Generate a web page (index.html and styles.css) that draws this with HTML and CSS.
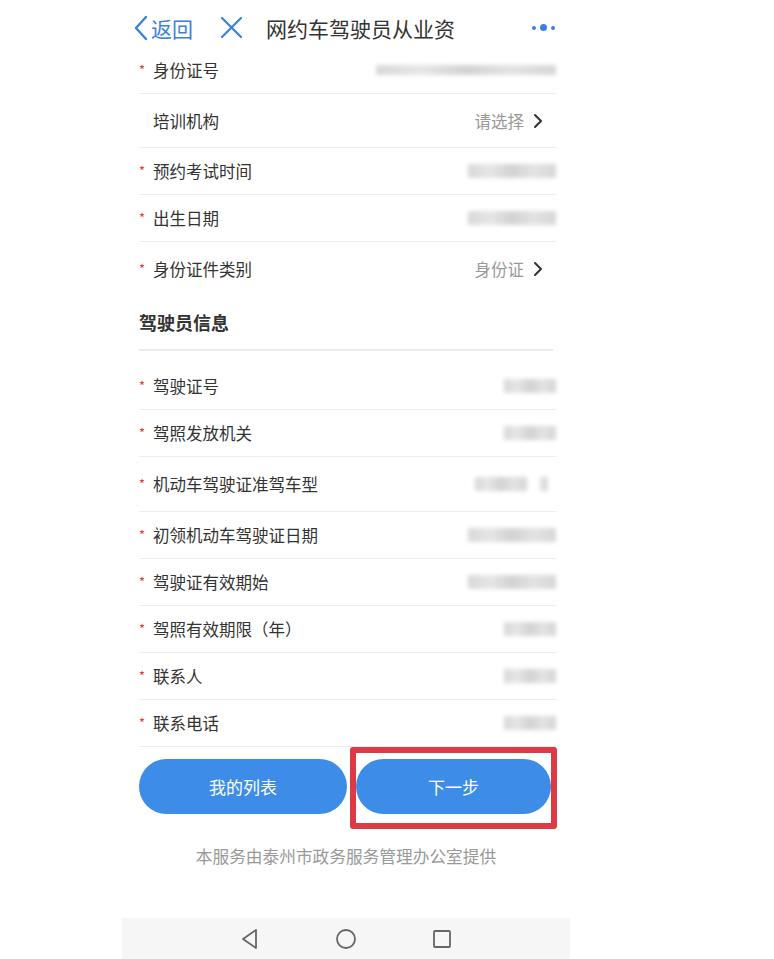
FILE: index.html
```html
<!DOCTYPE html>
<html lang="zh-CN">
<head>
    <meta charset="UTF-8">
    <meta name="viewport" content="width=device-width, initial-scale=1.0">
    <title>网约车驾驶员从业资格</title>
    <link rel="stylesheet" href="styles.css">
</head>
<body>
    <div class="phone">
        <!-- top bar -->
        <div class="topbar">
            <a class="back" href="#">
                <svg width="15" height="26" viewBox="0 0 15 26"><polyline points="13,2 3,13 13,24" fill="none" stroke="#3b80e0" stroke-width="2.4" stroke-linecap="round" stroke-linejoin="round"/></svg>
                <span>返回</span>
            </a>
            <a class="close" href="#">
                <svg width="23" height="23" viewBox="0 0 23 23"><path d="M2 2 L21 21 M21 2 L2 21" stroke="#3b80e0" stroke-width="2.2" stroke-linecap="round"/></svg>
            </a>
            <div class="title">网约车驾驶员从业资</div>
            <div class="dots"><i></i><i class="big"></i><i></i></div>
        </div>

        <div class="content">
            <div class="row">
                <div class="label"><span class="star">*</span>身份证号</div>
                <div class="blur w180"></div>
            </div>
            <div class="row tall">
                <div class="label"><span class="star"></span>培训机构</div>
                <div class="pick">请选择<svg width="11" height="16" viewBox="0 0 11 16"><polyline points="2,2 8,8 2,14" fill="none" stroke="#333" stroke-width="2" stroke-linecap="round" stroke-linejoin="round"/></svg></div>
            </div>
            <div class="row">
                <div class="label"><span class="star">*</span>预约考试时间</div>
                <div class="blur w90"></div>
            </div>
            <div class="row">
                <div class="label"><span class="star">*</span>出生日期</div>
                <div class="blur w90"></div>
            </div>
            <div class="row tall last">
                <div class="label"><span class="star">*</span>身份证件类别</div>
                <div class="pick">身份证<svg width="11" height="16" viewBox="0 0 11 16"><polyline points="2,2 8,8 2,14" fill="none" stroke="#333" stroke-width="2" stroke-linecap="round" stroke-linejoin="round"/></svg></div>
            </div>

            <div class="section">驾驶员信息</div>

            <div class="row">
                <div class="label"><span class="star">*</span>驾驶证号</div>
                <div class="blur w54"></div>
            </div>
            <div class="row">
                <div class="label"><span class="star">*</span>驾照发放机关</div>
                <div class="blur w54"></div>
            </div>
            <div class="row taller">
                <div class="label"><span class="star">*</span>机动车驾驶证准驾车型</div>
                <div class="blur-pair"><div class="blur w52"></div><div class="blur w8"></div></div>
            </div>
            <div class="row">
                <div class="label"><span class="star">*</span>初领机动车驾驶证日期</div>
                <div class="blur w90"></div>
            </div>
            <div class="row">
                <div class="label"><span class="star">*</span>驾驶证有效期始</div>
                <div class="blur w90"></div>
            </div>
            <div class="row">
                <div class="label"><span class="star">*</span>驾照有效期限（年）</div>
                <div class="blur w54"></div>
            </div>
            <div class="row">
                <div class="label"><span class="star">*</span>联系人</div>
                <div class="blur w54"></div>
            </div>
            <div class="row">
                <div class="label"><span class="star">*</span>联系电话</div>
                <div class="blur w54"></div>
            </div>

            <div class="actions">
                <button type="button" class="btn btn-list">我的列表</button>
                <div class="highlight">
                    <button type="button" class="btn">下一步</button>
                </div>
            </div>

            <p class="provider">本服务由泰州市政务服务管理办公室提供</p>
        </div>

        <!-- android nav -->
        <div class="navbar">
            <svg width="20" height="22" viewBox="0 0 20 22"><polygon points="16,2 3,11 16,20" fill="none" stroke="#666" stroke-width="1.8" stroke-linejoin="round"/></svg>
            <svg width="22" height="22" viewBox="0 0 22 22"><circle cx="11" cy="11" r="9" fill="none" stroke="#666" stroke-width="1.8"/></svg>
            <svg width="20" height="20" viewBox="0 0 20 20"><rect x="2" y="2" width="16" height="16" rx="1" fill="none" stroke="#666" stroke-width="1.8"/></svg>
        </div>
    </div>
</body>
</html>
```

FILE: styles.css
```css
* {
    box-sizing: border-box;
}
body {
    margin: 0;
    background: #fff;
    font-family: "Noto Sans CJK SC", "Noto Sans", sans-serif;
    color: #333;
}
.phone {
    width: 448px;
    margin-left: 122px;
}
.topbar {
    height: 47px;
    padding: 8px 15px 0 11px;
    display: flex;
    align-items: center;
}
.back {
    display: flex;
    align-items: center;
    gap: 3px;
    color: #3b80e0;
    font-size: 21px;
    text-decoration: none;
}
.close {
    display: flex;
    margin-left: 27px;
}
.title {
    margin-left: 23px;
    font-size: 21px;
    color: #333;
}
.dots {
    margin-left: auto;
    display: flex;
    align-items: center;
    gap: 4px;
}
.dots i {
    width: 4px;
    height: 4px;
    border-radius: 50%;
    background: #3b80e0;
}
.dots i.big {
    width: 7px;
    height: 7px;
}
.content {
    padding: 0 14px 0 17px;
}
.row {
    height: 47px;
    display: flex;
    align-items: center;
    justify-content: space-between;
    border-bottom: 1px solid #eee;
}
.row.tall {
    height: 54px;
}
.row.taller {
    height: 55px;
}
.row.last {
    border-bottom: none;
}
.label {
    font-size: 16.5px;
    color: #333;
    display: flex;
    align-items: center;
}
.star {
    display: inline-block;
    width: 14px;
    color: #e5383b;
    font-size: 13px;
    position: relative;
    top: -1px;
}
.pick {
    display: flex;
    align-items: center;
    gap: 9px;
    color: #999;
    font-size: 16.5px;
    margin-right: 12px;
}
.blur {
    height: 14px;
    background: linear-gradient(90deg, #d8d8d8 0%, #e6e6e6 25%, #d2d2d2 50%, #e3e3e3 75%, #d6d6d6 100%);
    filter: blur(2px);
}
.blur-pair {
    display: flex;
    gap: 13px;
    margin-right: 8px;
}
.w180 { width: 180px; height: 10px; }
.w90 { width: 88px; }
.w54 { width: 52px; }
.w52 { width: 52px; }
.w8 { width: 8px; }
.section {
    height: 55px;
    line-height: 53px;
    font-size: 18px;
    font-weight: bold;
    color: #333;
    border-bottom: 2px solid #ebebeb;
    margin-right: 3px;
    margin-bottom: 12px;
}
.actions {
    display: flex;
    align-items: flex-start;
    gap: 3px;
    margin-right: -1px;
}
.btn {
    height: 55px;
    border: none;
    border-radius: 28px;
    background: #3d8de8;
    color: #fff;
    font-size: 17px;
    font-family: inherit;
    cursor: pointer;
}
.btn-list {
    width: 208px;
    margin-top: 12px;
}
.highlight {
    width: 207px;
    padding: 6px 0 9px;
    border: 6px solid #dc3b46;
    border-radius: 3px;
    background: #fff;
}
.highlight .btn {
    width: 100%;
    display: block;
}
.provider {
    margin: 15px 0 0 -3px;
    text-align: center;
    font-size: 16.7px;
    line-height: 24px;
    color: #999;
}
.navbar {
    margin-top: 50px;
    height: 41px;
    background: #f6f6f6;
    display: flex;
    align-items: center;
    justify-content: center;
    gap: 75px;
}
```
